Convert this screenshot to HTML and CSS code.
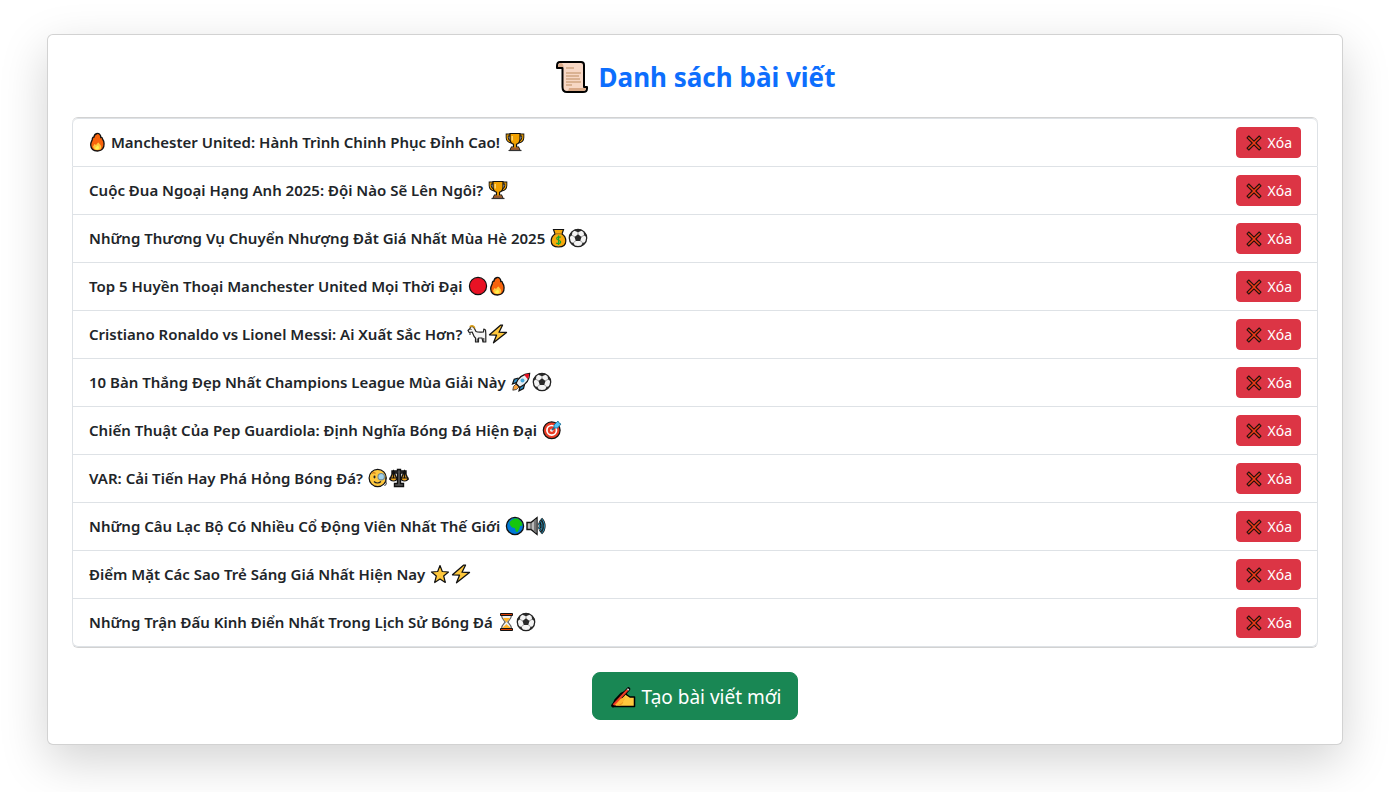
FILE: index.html
```html
<!DOCTYPE html>
<html lang="vi">
<head>
<meta charset="utf-8">
<meta name="viewport" content="width=device-width, initial-scale=1">
<title>Danh sách bài viết</title>
<link rel="stylesheet" href="styles.css">
</head>
<body>
<svg class="sprite" aria-hidden="true">
  <defs>
    <symbol id="fire" viewBox="0 0 17 20"><path d="M8.200 1.500C9 1 12 2 11.800 5.500C13 5 13.300 6 13.500 7C15.500 9.500 15.600 14 13.800 16.500C12.500 18.500 10.500 19 8.500 19C4.500 19 1.900 16.800 1.700 13C1.600 10.500 2.500 9.500 3.200 8C3.300 5.800 4 5 5 5C5.200 3 6.500 1.800 8.200 1.500Z" fill="#f7630c" stroke="#111" stroke-width="1.300"/><path d="M4 14C5 14 5 12.500 5.500 12C6.200 12 6.500 13 7 13C7.800 12 8.700 10.500 9.500 10.500C10.300 12 12 12.500 12.300 15C12.200 17.300 10.500 18 8.400 18C6 18 4.300 17 4 14Z" fill="#ffc83d"/><path d="M6 16C7 15 8 14 9 13.500C10 15 10.800 17.300 8.500 17.500C7 17.500 6.200 17 6 16Z" fill="#fff04d"/></symbol>
    <symbol id="trophy" viewBox="0 0 20 20"><path d="M5.500 3H2.200V5.500C2.200 8.500 4 9.500 6.500 10M14.500 3H17.800V5.500C17.800 8.500 16 9.500 13.500 10" fill="none" stroke="#111" stroke-width="3"/><path d="M5.500 3H2.200V5.500C2.200 8.500 4 9.500 6.500 10M14.500 3H17.800V5.500C17.800 8.500 16 9.500 13.500 10" fill="none" stroke="#f2a100" stroke-width="1.200"/><path d="M5 1.500H15V7C15 10 13.500 11.500 11.500 12.200V15H13.500L15 18.500H5L6.500 15H8.500V12.200C6.500 11.500 5 10 5 7Z" fill="#f2a100" stroke="#111" stroke-width="1.200"/><path d="M7.200 4V8.500" stroke="#ffe08a" stroke-width="1.300"/><path d="M6.500 15.500H13.500L14.800 18.500H5.200Z" fill="#9a5b32"/><path d="M3.500 18.500H16.500" stroke="#333" stroke-width="1.200"/></symbol>
    <symbol id="bag" viewBox="0 0 17 20"><path d="M3.500 1.500H13.500L12 6C14.500 7.500 15.800 10 15.800 13C15.800 17 13 19 8.500 19C4 19 1.200 17 1.200 13C1.200 10 2.500 7.500 5 6Z" fill="#f5a90c" stroke="#111" stroke-width="1.200"/><path d="M5 5.800H12" stroke="#9a6b1c"/><path d="M10.800 9.300C10 8.600 6.700 8.400 6.700 10.500C6.700 12.700 10.700 11.800 10.700 14C10.700 16 7 15.800 6.200 15M8.600 7.500V17" fill="none" stroke="#16a52e" stroke-width="1.200"/></symbol>
    <symbol id="ball" viewBox="0 0 20 20"><circle cx="10" cy="10" r="8.700" fill="#f4f4f4" stroke="#222" stroke-width="1.300"/><path d="M10 6.300L13.500 8.900L12.200 12.900H7.800L6.500 8.900Z M5.800 2.400L10 4.200L14.200 2.400L12.500 1.200H7.500Z M1.300 9L3.900 7.400L4.500 3.500L2 6Z M18.700 9L16.100 7.400L15.500 3.500L18 6Z M2.300 14.500L5.400 14.700L7.200 18.300L4.500 17.200Z M17.700 14.500L14.600 14.700L12.800 18.300L15.500 17.200Z" fill="#292929"/><path d="M10 4V7M3.700 7.200L7 9M16.300 7.200L13 9M5.300 14.800L8 12.500M14.700 14.800L12 12.500" stroke="#777" stroke-width=".7"/></symbol>
    <symbol id="red" viewBox="0 0 20 20"><circle cx="10" cy="10" r="8.600" fill="#e81224" stroke="#111" stroke-width="1.200"/></symbol>
    <symbol id="goat" viewBox="0 0 20 20"><path d="M3.500 3C5 2 6.500 2.500 7.200 4L9 7.500C11 8.500 14 8 16.500 8L16.800 5L18.500 6L18.800 9.500V18H16L15 14H11.500V18H8.500V14C6.500 12.500 6 10 5.200 8L2.200 8.500L1 6.500L3 4.500Z" fill="#f5f5f5" stroke="#222" stroke-width="1.200" stroke-linejoin="round"/><path d="M2.800 2.800C5 1 7.200 2 7.700 4.300" fill="none" stroke="#d69b17" stroke-width="1.600"/><path d="M3 8.500V11M10.200 14.500V18M16.800 14V18M4 5V6" stroke="#222"/></symbol>
    <symbol id="bolt" viewBox="0 0 20 20"><path d="M12.500 1.200L1.500 10.800L8.500 11.200L5.500 18.800L18.500 8.500L11 8.200L14.500 1.200Z" fill="#ffc83d" stroke="#111" stroke-width="1.300" stroke-linejoin="round"/></symbol>
    <symbol id="rocket" viewBox="0 0 20 20"><path d="M7.500 6L3.200 7.200L1.500 12L5.500 10.500M13.500 12.500L12.500 16.500L8 18.800L9 14.500" fill="#2f91c9" stroke="#111" stroke-width="1.200"/><path d="M5 12L2.500 14.500L1.800 18.200L5.500 17.500L8 15Z" fill="#f7a23d" stroke="#333" stroke-width=".8"/><path d="M5 11.500C7 6 11 2 18.700 1.300C18.500 8 14.500 13 8.800 15.300Z" fill="#e7eef2" stroke="#111" stroke-width="1.200"/><path d="M13 2.800C14.500 2 16.500 1.700 18.200 1.800C18 3.800 17.700 5.500 16.800 7.200Z" fill="#e81224"/><circle cx="11.500" cy="8.500" r="2" fill="#45a8dc"/></symbol>
    <symbol id="target" viewBox="0 0 20 20"><circle cx="9.700" cy="10.300" r="8.400" fill="#e83b24" stroke="#111" stroke-width="1.200"/><circle cx="9.700" cy="10.300" r="4.800" fill="#e83b24" stroke="#fff" stroke-width="1.700"/><circle cx="9.700" cy="10.300" r="1.500" fill="#fff"/><path d="M9.700 10.300L15 5" stroke="#176a91" stroke-width="1.500"/><path d="M12 5L16 1L17 3L19 4L15.500 8L12 8Z" fill="#4fc3f7" stroke="#176a91" stroke-width=".8"/></symbol>
    <symbol id="monocle" viewBox="0 0 20 20"><circle cx="9.700" cy="10" r="8.600" fill="#ffc83d" stroke="#111" stroke-width="1.200"/><path d="M4 5.500C5 4.500 6.500 4.500 7.500 5.500" fill="none" stroke="#d67d17" stroke-width="1.200"/><ellipse cx="6.500" cy="9" rx="1" ry="1.400" fill="#222"/><path d="M6 13.500C8 15.500 11 15.300 13 13.500" fill="none" stroke="#222" stroke-width="1.200"/><path d="M17 9L18.300 16L16.500 18" fill="none" stroke="#333"/><circle cx="13.200" cy="8.700" r="3.200" fill="#9fd0ea" stroke="#738a97" stroke-width="1.100"/></symbol>
    <symbol id="scales" viewBox="0 0 20 20"><path d="M8.500 1.500H11.500V3H17V5H11.500V15.500H14.500V18.500H5.500V15.500H8.500V5H3V3H8.500Z" fill="#555" stroke="#111" stroke-width="1.400"/><path d="M4.500 3L1 11H8ZM15.500 3L12 11H19Z" fill="#ffb52b" stroke="#111" stroke-width="1.400"/><path d="M4.500 3.500V10M15.500 3.500V10" stroke="#111" stroke-width="1.500"/><path d="M1 10H8C7.800 14 1.200 14 1 10ZM12 10H19C18.800 14 12.200 14 12 10Z" fill="#f2a51a" stroke="#111" stroke-width="1.200"/></symbol>
    <symbol id="globe" viewBox="0 0 20 20"><circle cx="10" cy="10" r="8.600" fill="#0078d7"/><path d="M4.500 6L7 4L9.500 2.500L13 2.500L17 6.500L17.500 9.500L15 10L14.500 12.500L12.500 16L10.800 15.500L10 12L7 11.500L5 9Z" fill="#16c60c"/><circle cx="10" cy="10" r="8.600" fill="none" stroke="#111" stroke-width="1.300"/></symbol>
    <symbol id="speaker" viewBox="0 0 20 20"><path d="M1 6.500H5L11 1.800V18.200L5 13.500H1Z" fill="#bbb" stroke="#111" stroke-width="1.400"/><path d="M5 6.500V13.500" stroke="#444"/><path d="M8 4.800V15.200L10.500 17.200V2.800Z" fill="#777"/><path d="M12.500 7C14.300 8 14.300 12 12.500 13M13.800 4.500C16.800 7 16.800 13 13.800 15.500M15.300 2.500C19.500 6.500 19.500 13.500 15.300 17.500" fill="none" stroke="#111" stroke-width="2.300"/><path d="M12.500 7C14.300 8 14.300 12 12.500 13M13.800 4.500C16.800 7 16.800 13 13.800 15.500M15.300 2.500C19.500 6.500 19.500 13.500 15.300 17.500" fill="none" stroke="#35b5e5" stroke-width=".8"/></symbol>
    <symbol id="star" viewBox="0 0 20 20"><path d="M10 1.500L12.300 7.500L18.500 8L13.700 12L15.300 18.500L10 15L4.700 18.500L6.300 12L1.500 8L7.700 7.500Z" fill="#ffc83d" stroke="#111" stroke-width="1.200" stroke-linejoin="round"/></symbol>
    <symbol id="hourglass" viewBox="0 0 17 20"><path d="M3.500 3H13.500C13.500 7 11 8.500 9.700 10C11 11.500 13.500 13 13.500 17H3.500C3.500 13 6 11.500 7.300 10C6 8.500 3.500 7 3.500 3Z" fill="#eee" stroke="#555" stroke-width="1.100"/><path d="M4.800 6H12.200C11 8 9.300 9 8.500 10.500C7.700 9 6 8 4.800 6ZM4.200 16.500C5 14.500 7 14 8.500 12C10 14 12 14.500 12.800 16.500Z" fill="#ffb52b"/><path d="M2.500 1.500H14.500V3.500H2.500ZM2.500 16.500H14.500V18.500H2.500Z" fill="#d83b01" stroke="#111" stroke-width="1"/></symbol>
    <symbol id="scroll" viewBox="0 0 34 34"><path d="M5 2H26Q29 2 29 5V27H32V28.500Q32 32 28 32H12Q7.500 32 7.500 27V8H2V6Q2 2 5 2Z" fill="#f7d7c4" stroke="#000" stroke-width="2" stroke-linejoin="round"/><path d="M3 7V5.500Q3.500 3 6 3Q8.500 3.500 8.500 7ZM14 28H31Q31 31 28 31H12Q14 30.500 14 28Z" fill="#d9a988"/><path d="M11 8H19M11 13H26M11 16H24M11 19H25M11 22H26M11 25H17" stroke="#bd8d60" stroke-width="1"/></symbol>
    <symbol id="cross" viewBox="0 0 16 16"><path d="M2.800 1L8 6.200L13.200 1L15 2.800L9.800 8L15 13.200L13.200 15L8 9.800L2.800 15L1 13.200L6.200 8L1 2.800Z" fill="#f03a17" stroke="#24120d" stroke-width="1.100" stroke-linejoin="round"/></symbol>
    <symbol id="writing" viewBox="0 0 26 22"><path d="M2.500 20L5 14L11 7.500L14.500 6L17 9L20 11H24.500V20.500H2.500Z" fill="#ffc83d" stroke="#000" stroke-width="1.500" stroke-linejoin="round"/><path d="M10 15.500L14 13M8.500 19Q12 18 12.500 15.500" fill="none" stroke="#eb9b20" stroke-width="1.800"/><path d="M3 19.500L18.500 3" stroke="#000" stroke-width="3.600" stroke-linecap="round"/><path d="M9 13L15.500 11L12 17L8 19H4Z" fill="#ffb72f"/><path d="M3.500 19L17.500 4" stroke="#ef3b24" stroke-width="2"/><path d="M17.600 4L18.600 2.900" stroke="#ddd" stroke-width="2"/></symbol>
  </defs>
</svg>
<main class="container">
  <section class="card">
    <h1 class="heading"><svg class="icon-scroll" aria-hidden="true"><use href="#scroll"/></svg> Danh sách bài viết</h1>
    <ul class="posts">
      <li class="post"><a class="title" href="#"><svg class="emoji narrow lead"><use href="#fire"/></svg> Manchester United: Hành Trình Chinh Phục Đỉnh Cao! <svg class="emoji"><use href="#trophy"/></svg></a><button class="delete" type="button"><svg class="icon-cross"><use href="#cross"/></svg> Xóa</button></li>
      <li class="post"><a class="title" href="#">Cuộc Đua Ngoại Hạng Anh 2025: Đội Nào Sẽ Lên Ngôi? <svg class="emoji"><use href="#trophy"/></svg></a><button class="delete" type="button"><svg class="icon-cross"><use href="#cross"/></svg> Xóa</button></li>
      <li class="post"><a class="title" href="#">Những Thương Vụ Chuyển Nhượng Đắt Giá Nhất Mùa Hè 2025 <svg class="emoji narrow"><use href="#bag"/></svg><svg class="emoji"><use href="#ball"/></svg></a><button class="delete" type="button"><svg class="icon-cross"><use href="#cross"/></svg> Xóa</button></li>
      <li class="post"><a class="title" href="#">Top 5 Huyền Thoại Manchester United Mọi Thời Đại <svg class="emoji"><use href="#red"/></svg><svg class="emoji narrow"><use href="#fire"/></svg></a><button class="delete" type="button"><svg class="icon-cross"><use href="#cross"/></svg> Xóa</button></li>
      <li class="post"><a class="title" href="#">Cristiano Ronaldo vs Lionel Messi: Ai Xuất Sắc Hơn? <svg class="emoji"><use href="#goat"/></svg><svg class="emoji"><use href="#bolt"/></svg></a><button class="delete" type="button"><svg class="icon-cross"><use href="#cross"/></svg> Xóa</button></li>
      <li class="post"><a class="title" href="#">10 Bàn Thắng Đẹp Nhất Champions League Mùa Giải Này <svg class="emoji"><use href="#rocket"/></svg><svg class="emoji"><use href="#ball"/></svg></a><button class="delete" type="button"><svg class="icon-cross"><use href="#cross"/></svg> Xóa</button></li>
      <li class="post"><a class="title" href="#">Chiến Thuật Của Pep Guardiola: Định Nghĩa Bóng Đá Hiện Đại <svg class="emoji"><use href="#target"/></svg></a><button class="delete" type="button"><svg class="icon-cross"><use href="#cross"/></svg> Xóa</button></li>
      <li class="post"><a class="title" href="#">VAR: Cải Tiến Hay Phá Hỏng Bóng Đá? <svg class="emoji"><use href="#monocle"/></svg><svg class="emoji"><use href="#scales"/></svg></a><button class="delete" type="button"><svg class="icon-cross"><use href="#cross"/></svg> Xóa</button></li>
      <li class="post"><a class="title" href="#">Những Câu Lạc Bộ Có Nhiều Cổ Động Viên Nhất Thế Giới <svg class="emoji"><use href="#globe"/></svg><svg class="emoji"><use href="#speaker"/></svg></a><button class="delete" type="button"><svg class="icon-cross"><use href="#cross"/></svg> Xóa</button></li>
      <li class="post"><a class="title" href="#">Điểm Mặt Các Sao Trẻ Sáng Giá Nhất Hiện Nay <svg class="emoji"><use href="#star"/></svg><svg class="emoji"><use href="#bolt"/></svg></a><button class="delete" type="button"><svg class="icon-cross"><use href="#cross"/></svg> Xóa</button></li>
      <li class="post"><a class="title" href="#">Những Trận Đấu Kinh Điển Nhất Trong Lịch Sử Bóng Đá <svg class="emoji narrow"><use href="#hourglass"/></svg><svg class="emoji"><use href="#ball"/></svg></a><button class="delete" type="button"><svg class="icon-cross"><use href="#cross"/></svg> Xóa</button></li>
    </ul>
    <div class="actions"><a class="create" href="#"><svg class="icon-writing"><use href="#writing"/></svg> Tạo bài viết mới</a></div>
  </section>
</main>
</body>
</html>
```
FILE: styles.css
```css
*, *::before, *::after { box-sizing: border-box; }
body {
  margin: 0;
  padding: 34px 5px 47px 0;
  background: #fff;
  color: #212529;
  font-family: "Noto Sans", "Open Sans", sans-serif;
  font-size: 15px;
  line-height: 24px;
}
.sprite { position: absolute; width: 0; height: 0; }
.container { max-width: 1320px; margin: 0 auto; padding: 0 12px; }
.card {
  padding: 24px;
  border: 1px solid rgba(0, 0, 0, .175);
  border-radius: 6px;
  background: #fff;
  background-clip: border-box;
  box-shadow: 0 16px 48px rgba(0, 0, 0, .175);
}
.heading {
  display: flex;
  justify-content: center;
  align-items: center;
  gap: 10px;
  margin: 0 0 22px;
  color: #0d6efd;
  font-size: 26px;
  line-height: 36px;
  font-weight: 700;
}
.icon-scroll { width: 34px; height: 34px; flex: none; }
.posts {
  margin: 0 0 24px;
  padding: 0;
  list-style: none;
  border: solid rgba(0, 0, 0, .175);
  border-width: 1px 0;
  border-radius: 6px;
}
.post {
  display: flex;
  justify-content: space-between;
  align-items: center;
  gap: 16px;
  padding: 8px 16px;
  border: 1px solid #dee2e6;
  border-top-width: 0;
}
.post:first-child { border-top-width: 1px; border-radius: 6px 6px 0 0; }
.post:last-child { border-radius: 0 0 6px 6px; }
.title { padding-bottom: 2px; color: #212529; font-weight: 600; text-decoration: none; }
.emoji { width: 20px; height: 20px; margin-left: 1px; vertical-align: -4px; }
.narrow { width: 17px; }
.lead { margin: 0 1px 0 0; }
.delete {
  display: flex;
  align-items: center;
  gap: 5px;
  flex: none;
  padding: 4px 8px;
  border: 1px solid #dc3545;
  border-radius: 4px;
  background: #dc3545;
  color: #fff;
  font-family: inherit;
  font-size: 14px;
  line-height: 21px;
}
.icon-cross { width: 16px; height: 16px; margin-left: 1px; }
.actions { display: flex; justify-content: center; }
.create {
  display: flex;
  align-items: center;
  gap: 6px;
  padding: 9px 16px 7px 17px;
  border: 1px solid #198754;
  border-radius: 8px;
  background: #198754;
  color: #fff;
  font-size: 19px;
  line-height: 30px;
  text-decoration: none;
}
.icon-writing { width: 26px; height: 22px; }
```
